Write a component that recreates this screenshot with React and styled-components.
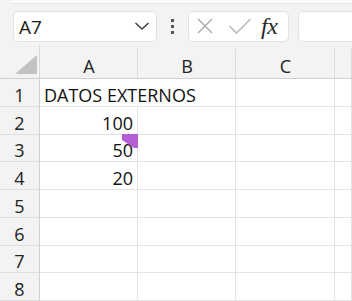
import React from "react";
import styled, { createGlobalStyle } from "styled-components";

const Global = createGlobalStyle`
  html, body { margin: 0; padding: 0; background: #ffffff; overflow: hidden; }
  body { font-family: "Open Sans", "Noto Sans", sans-serif; color: #1f1f1f; }
`;

const Page = styled.div`
  width: 352px;
  height: 301px;
  overflow: hidden;
  display: flex;
  flex-direction: column;
  background: #f3f3f3;
`;

const TopEdge = styled.div`
  height: 3px;
  background: #fafafa;
  border-bottom: 1px solid #e6e6e6;
  margin-left: 10px;
`;

const Toolbar = styled.div`
  display: flex;
  align-items: center;
  height: 44px;
  padding: 4px 0 0 13px;
  box-sizing: border-box;
  overflow: hidden;
`;

const Box = styled.div`
  flex-shrink: 0;
  height: 31px;
  box-sizing: border-box;
  background: #ffffff;
  border: 1px solid #e2e2e2;
  border-radius: 5px;
  display: flex;
  align-items: center;
  width: ${(p) => p.$w}px;
  margin-left: ${(p) => p.$ml || 0}px;
`;

const NameText = styled.span`
  font-size: 19px;
  padding-left: 5px;
  padding-top: 1px;
  flex: 1;
  color: #1a1a1a;
`;

const Dots = styled.div`
  display: flex;
  flex-direction: column;
  gap: 3px;
  margin-left: 14px;
  span {
    width: 3px;
    height: 3px;
    background: #555;
  }
`;

const Fx = styled.span`
  font-family: "Liberation Serif", "DejaVu Serif", serif;
  font-style: italic;
  font-weight: 400;
  font-size: 24px;
  color: #262626;
  margin-left: 9px;
  letter-spacing: -0.5px;
`;

const Sheet = styled.div`
  display: grid;
  grid-template-columns: 40px 98px 98px 99px 1fr;
  grid-template-rows: 34px repeat(8, 27.75px);
  flex: 1;
  background: #ffffff;
`;

const Corner = styled.div`
  background: #f3f3f3;
  border-right: 1px solid #d8d8d8;
  border-bottom: 1px solid #cfcfcf;
  box-sizing: border-box;
  position: relative;
  svg { position: absolute; left: 15px; top: 10px; }
`;

const ColHead = styled.div`
  background: #f3f3f3;
  border-bottom: 1px solid #cfcfcf;
  box-sizing: border-box;
  display: flex;
  align-items: center;
  justify-content: center;
  font-size: 18px;
  color: #222;
  position: relative;
  padding-top: 9px;
  &::after {
    content: "";
    position: absolute;
    right: 0;
    top: 4px;
    bottom: 0;
    width: 1px;
    background: #dcdcdc;
  }
`;

const RowHead = styled.div`
  background: #f3f3f3;
  border-right: 1px solid #d0d0d0;
  border-bottom: 1px solid #dedede;
  box-sizing: border-box;
  display: flex;
  align-items: center;
  justify-content: center;
  font-size: 18px;
  color: #222;
  padding-top: 5px;
`;

const Cell = styled.div`
  border-right: 1px solid ${(p) => (p.$noRight ? "transparent" : "#e3e3e3")};
  border-bottom: 1px solid #e3e3e3;
  box-sizing: border-box;
  display: flex;
  align-items: center;
  justify-content: ${(p) => (p.$num ? "flex-end" : "flex-start")};
  padding: 5px 4px 0;
  font-size: 18px;
  color: #111;
  white-space: nowrap;
  overflow: visible;
  position: relative;
  z-index: ${(p) => (p.$over ? 1 : 0)};
`;

const Flag = styled.svg`
  position: absolute;
  right: -1px;
  top: -1px;
`;

const cols = ["A", "B", "C", ""];
const data = {
  1: { A: { v: "DATOS EXTERNOS" } },
  2: { A: { v: "100", num: true } },
  3: { A: { v: "50", num: true, flag: true } },
  4: { A: { v: "20", num: true } },
};

export default function App() {
  return (
    <Page>
      <Global />
      <TopEdge />
      <Toolbar>
        <Box $w={144}>
          <NameText>A7</NameText>
          <svg width="16" height="10" viewBox="0 0 16 10" style={{ marginRight: 6 }}>
            <polyline points="1.5,2 8,8 14.5,2" fill="none" stroke="#3a3a3a" strokeWidth="1.4" />
          </svg>
        </Box>
        <Dots>
          <span />
          <span />
          <span />
        </Dots>
        <Box $w={101} $ml={14}>
          <svg width="18" height="18" viewBox="0 0 18 18" style={{ marginLeft: 7 }}>
            <path d="M2 2 L16 16 M16 2 L2 16" stroke="#a8a8a8" strokeWidth="1.4" fill="none" />
          </svg>
          <svg width="24" height="18" viewBox="0 0 24 18" style={{ marginLeft: 14 }}>
            <polyline points="1.5,9 8.5,16 22.5,2" fill="none" stroke="#b4b4b4" strokeWidth="1.4" />
          </svg>
          <Fx>fx</Fx>
        </Box>
        <Box $w={90} $ml={9} />
      </Toolbar>
      <Sheet>
        <Corner>
          <svg width="23" height="20" viewBox="0 0 23 20">
            <polygon points="22,0 22,19 0,19" fill="#c2c2c2" />
          </svg>
        </Corner>
        {cols.map((c, i) => (
          <ColHead key={i}>{c}</ColHead>
        ))}
        {[1, 2, 3, 4, 5, 6, 7, 8].map((r) => (
          <React.Fragment key={r}>
            <RowHead>{r}</RowHead>
            {cols.map((c, i) => {
              const d = (data[r] || {})[c || "D"];
              return (
                <Cell
                  key={i}
                  $num={d && d.num}
                  $over={r === 1 && c === "A"}
                  $noRight={r === 1 && c === "A"}
                >
                  {d ? d.v : ""}
                  {d && d.flag && (
                    <Flag width="16" height="14" viewBox="0 0 16 14">
                      <polygon points="0,0 16,0 16,14 12,14 0,6" fill="#b55fd6" />
                    </Flag>
                  )}
                </Cell>
              );
            })}
          </React.Fragment>
        ))}
      </Sheet>
    </Page>
  );
}
